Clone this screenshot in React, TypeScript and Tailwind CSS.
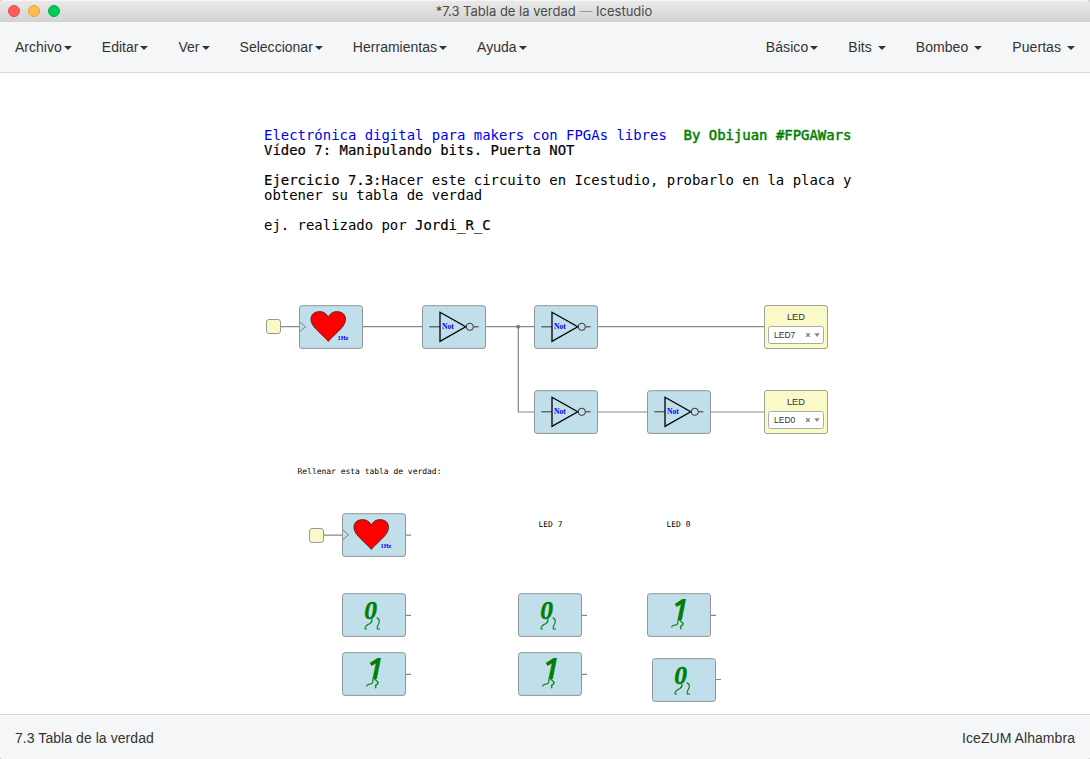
import React from "react";

type Kind = "heart" | "not" | "zero" | "one";

const leftMenus = ["Archivo", "Editar", "Ver", "Seleccionar", "Herramientas", "Ayuda"];
const rightMenus = ["Básico", "Bits", "Bombeo", "Puertas"];

const blocks: { kind: Kind; place: string }[] = [
  { kind: "heart", place: "left-[299px] top-[232px]" },
  { kind: "not", place: "left-[422px] top-[232px]" },
  { kind: "not", place: "left-[534px] top-[232px]" },
  { kind: "not", place: "left-[534px] top-[317px]" },
  { kind: "not", place: "left-[647px] top-[317px]" },
  { kind: "heart", place: "left-[342px] top-[440px]" },
  { kind: "zero", place: "left-[342px] top-[520px]" },
  { kind: "one", place: "left-[342px] top-[579px]" },
  { kind: "zero", place: "left-[518px] top-[520px]" },
  { kind: "one", place: "left-[518px] top-[579px]" },
  { kind: "one", place: "left-[647px] top-[520px]" },
  { kind: "zero", place: "left-[652px] top-[585px]" },
];

const leds = [
  { value: "LED7", place: "left-[764px] top-[232px]" },
  { value: "LED0", place: "left-[764px] top-[317px]" },
];

const pins = ["left-[266px] top-[246px]", "left-[309px] top-[455px]"];

function Menu({ label, spaced = false }: { label: string; spaced?: boolean }) {
  return (
    <div className="flex h-full items-center px-[15px]">
      <span>{label}</span>
      <span
        className={`mt-[2px] h-0 w-0 border-x-4 border-t-4 border-x-transparent border-t-[#333] ${
          spaced ? "ml-[6px]" : "ml-[2px]"
        }`}
      />
    </div>
  );
}

function HeartIcon() {
  return (
    <>
      <path d="M1 17 L6.5 21.8 L1 26.500" fill="none" stroke="#777" strokeWidth="0.9" />
      <path
        d="M29.3 36.5 C26 32.500 20 27.500 16 23 C10.800 17.500 11 11.500 14.300 8.600 C18.500 5.200 27 5.800 29.300 12.400 C31.600 5.800 40 5.200 44.200 8.600 C47.500 11.500 47.700 17.500 42.600 23 C38.500 27.500 32.500 32.500 29.300 36.500 Z"
        fill="#ff0000"
        stroke="#222"
        strokeWidth="0.7"
      />
      <text x="38.500" y="34.800" fontSize="6.300" className="fill-[#0000ff] font-['Liberation_Serif',serif] font-bold">
        1Hz
      </text>
    </>
  );
}

function NotIcon() {
  return (
    <>
      <path d="M7.300 21.800 H18 M51.500 21.800 H56.500" stroke="#333" strokeWidth="1" />
      <path d="M18 7.300 L43.700 21.800 L18 36.300 Z" fill="none" stroke="#000" strokeWidth="1.300" />
      <circle cx="47.800" cy="21.800" r="3.600" fill="none" stroke="#333" strokeWidth="1" />
      <text x="20" y="24" fontSize="7.600" className="fill-[#0000ff] font-['Liberation_Serif',serif] font-bold">
        Not
      </text>
    </>
  );
}

function ZeroIcon() {
  return (
    <>
      <text
        x="22.300"
        y="26.300"
        fontSize="25.500"
        strokeWidth="0.500"
        className="fill-[#008000] stroke-[#008000] font-['Liberation_Serif',serif] font-bold italic"
      >
        0
      </text>
      <path
        d="M30 26 Q30.500 29 28 30.500 Q24.500 32 23.700 33.500 Q22.500 35.300 23.200 36 H25 M34.700 24.500 Q37.800 26.500 37.300 28.500 Q37 30.500 36 32 Q34.500 34.300 35.300 36 H38"
        fill="none"
        stroke="#008000"
        strokeWidth="1.100"
      />
    </>
  );
}

function OneIcon() {
  return (
    <>
      <text x="25.300" y="27.300" fontSize="28" className="fill-[#008000] font-['Open_Sans',sans-serif] font-bold italic">
        1
      </text>
      <path
        d="M31 27 Q31.200 30.500 30 31.500 L26.200 32.500 Q24.500 33 24.700 34.500 M32.500 27 Q35 29 36.200 30.700 Q35.500 32.500 33.500 33.200 Q34.500 34.500 33.500 36.300"
        fill="none"
        stroke="#008000"
        strokeWidth="1.200"
      />
    </>
  );
}

const icons: Record<Kind, () => React.ReactElement> = {
  heart: HeartIcon,
  not: NotIcon,
  zero: ZeroIcon,
  one: OneIcon,
};

function Block({ kind, place }: { kind: Kind; place: string }) {
  const Icon = icons[kind];
  return (
    <svg className={`absolute h-[44px] w-[64px] overflow-visible ${place}`} viewBox="0 0 64 44">
      <rect x="0.500" y="0.700" width="63" height="42.700" rx="2.500" fill="#c0dfeb" stroke="#929698" strokeWidth="1" />
      <Icon />
    </svg>
  );
}

function Led({ value, place }: { value: string; place: string }) {
  return (
    <div
      className={`absolute flex h-[44px] w-[64px] flex-col items-center rounded-[3px] border border-[#a2a298] bg-[#fafac8] font-['Liberation_Sans',sans-serif] tracking-normal text-[#333] ${place}`}
    >
      <span className="mt-[6px] text-[9.300px] leading-[11px]">LED</span>
      <div className="mt-[3px] flex h-[18px] w-[56px] items-center rounded-[2.500px] border border-[#aaa] bg-white pl-[5px] text-[8.500px] leading-none">
        <span className="w-[31px]">{value}</span>
        <svg className="h-[6px] w-[16px]" viewBox="0 0 16 6">
          <path d="M1.200 1.200 L4.800 4.800 M4.800 1.200 L1.200 4.800" stroke="#777" strokeWidth="1.200" />
          <path d="M9.300 1.300 H14.700 L12 5 Z" fill="#888" />
        </svg>
      </div>
    </div>
  );
}

export default function App() {
  return (
    <div className="h-[759px] w-[1090px] overflow-hidden bg-[#d8d8d8]">
      <div className="flex h-full flex-col overflow-hidden rounded-t-[5px] rounded-b-[4px] bg-white font-['Liberation_Sans',sans-serif] text-[14px] text-[#333]">
        <header className="grid h-[22px] shrink-0 grid-cols-[1fr_auto_1fr] items-center border-t border-[#f6f6f6] bg-linear-to-b from-[#eaeaea] to-[#d2d2d2]">
          <div className="-mt-px flex gap-[8px] pl-[8px]">
            <span className="h-[12px] w-[12px] rounded-full border border-[#e9494a] bg-[#ff5c5c]" />
            <span className="h-[12px] w-[12px] rounded-full border border-[#e5a33c] bg-[#ffbd4c]" />
            <span className="h-[12px] w-[12px] rounded-full border border-[#00b14a] bg-[#00ca56]" />
          </div>
          <div className="-mt-px pr-[2px] font-['Inter',sans-serif] text-[13px] leading-[20px] whitespace-nowrap text-[#4a4a4a]">
            *7.3 Tabla de la verdad <span className="text-[#999]">—</span> Icestudio
          </div>
          <div />
        </header>

        <nav className="flex h-[51px] shrink-0 justify-between border-b border-[#d5dadd] bg-[#f5f6f8]">
          <div className="flex tracking-[0.015px]">
            {leftMenus.map((m) => (
              <Menu key={m} label={m} />
            ))}
          </div>
          <div className="flex tracking-[0.06px]">
            {rightMenus.map((m, i) => (
              <Menu key={m} label={m} spaced={i > 0} />
            ))}
          </div>
        </nav>

        <main className="relative flex-1 font-['DejaVu_Sans_Mono',monospace]">
          <div className="absolute top-[55px] left-[264px] text-[13.950px] leading-[15px] whitespace-pre text-black">
            <div>
              <span className="text-[#0000e6]">Electrónica digital para makers con FPGAs libres</span>
              {"  "}
              <span className="text-[#008000] [-webkit-text-stroke:0.5px_#008000]">By Obijuan #FPGAWars</span>
            </div>
            <div className="[-webkit-text-stroke:0.2px_black]">Vídeo 7: Manipulando bits. Puerta NOT</div>
            <div>&nbsp;</div>
            <div>
              <span className="[-webkit-text-stroke:0.2px_black]">Ejercicio 7.3:</span>
              Hacer este circuito en Icestudio, probarlo en la placa y
            </div>
            <div>obtener su tabla de verdad</div>
            <div>&nbsp;</div>
            <div>
              ej. realizado por <span className="[-webkit-text-stroke:0.2px_black]">Jordi_R_C</span>
            </div>
          </div>

          <svg className="absolute top-0 left-0 h-[641px] w-[1090px]" viewBox="0 73 1090 641">
            <g fill="none" stroke="#888" strokeWidth="1.200">
              <path d="M280 326.700 H299 M363 326.700 H422 M486 326.700 H534 M598 326.700 H764" />
              <path d="M518.300 326.700 V412 H534 M598 412 H647 M711 412 H764" />
              <path d="M323 535.200 H342 M406 535.200 H411" />
              <path d="M406 615.400 H411 M582 615.400 H587 M711 615.400 H716" />
              <path d="M406 674.400 H411 M582 674.400 H587 M716 679.500 H721" />
            </g>
            <circle cx="518.200" cy="326.700" r="1.900" fill="#777" />
          </svg>

          {pins.map((p) => (
            <div key={p} className={`absolute h-[15px] w-[15px] rounded-[3px] border border-[#999] bg-[#fafac8] ${p}`} />
          ))}
          {blocks.map((b) => (
            <Block key={b.place} {...b} />
          ))}
          {leds.map((l) => (
            <Led key={l.value} {...l} />
          ))}

          <div className="absolute top-[394px] left-[297.500px] text-[7.970px] leading-[10px] whitespace-pre text-black">
            Rellenar esta tabla de verdad:
          </div>
          <div className="absolute top-[447px] left-[538.500px] text-[7.970px] leading-[10px] whitespace-pre text-black">LED 7</div>
          <div className="absolute top-[447px] left-[666.500px] text-[7.970px] leading-[10px] whitespace-pre text-black">LED 0</div>
        </main>

        <footer className="flex h-[45px] shrink-0 items-center justify-between border-t border-[#d5dadd] bg-[#f5f6f8] px-[15px] tracking-[0.06px]">
          <span className="mt-[3px]">7.3 Tabla de la verdad</span>
          <span className="mt-[3px]">IceZUM Alhambra</span>
        </footer>
      </div>
    </div>
  );
}
